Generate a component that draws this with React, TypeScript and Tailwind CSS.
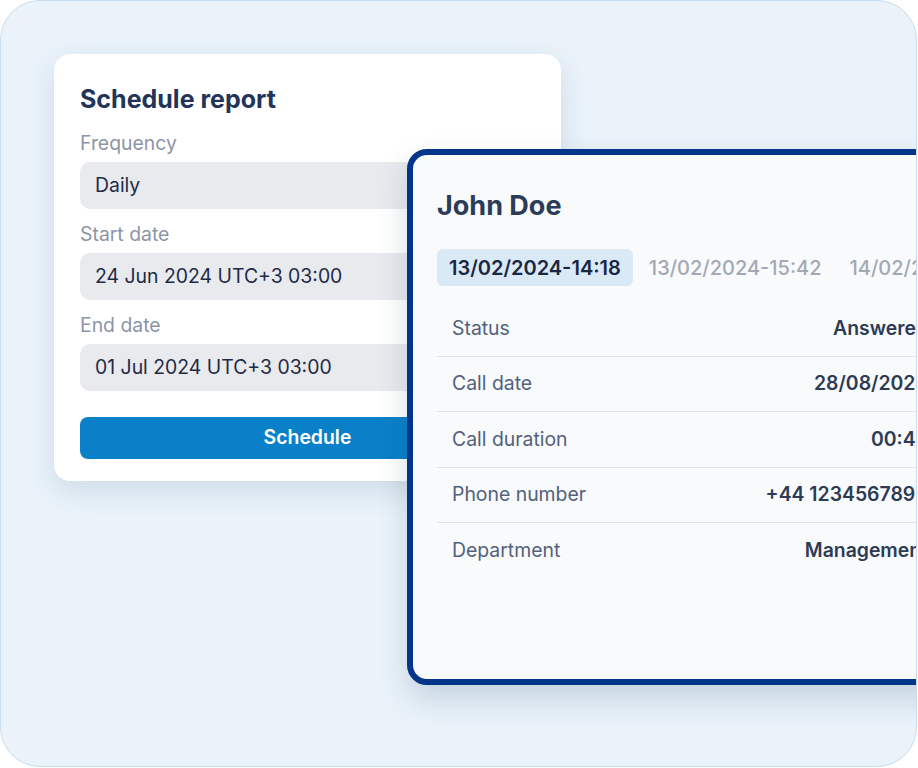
const fields = [
    { label: 'Frequency', value: 'Daily' },
    { label: 'Start date', value: '24 Jun 2024 UTC+3 03:00' },
    { label: 'End date', value: '01 Jul 2024 UTC+3 03:00' },
];

const tabs = ['13/02/2024-14:18', '13/02/2024-15:42', '14/02/2024-09:05'];

const rows = [
    { label: 'Status', value: 'Answered' },
    { label: 'Call date', value: '28/08/2024' },
    { label: 'Call duration', value: '00:49' },
    { label: 'Phone number', value: '+44 1234567890' },
    { label: 'Department', value: 'Management' },
];

const ScheduleCard = () => (
    <div className="w-[507px] rounded-[16px] bg-white px-[26px] pt-[29px] pb-[22px] shadow-[0_10px_28px_rgba(40,70,110,0.14)]">
        <h2 className="text-[25px] leading-[32px] font-bold text-[#22345a]">Schedule report</h2>
        <div className="mt-[14px]">
            {fields.map((f, i) => (
                <div key={f.label} className={i > 0 ? 'mt-[11px]' : ''}>
                    <div className="text-[19.4px] leading-[28px] text-[#8c95a6]">{f.label}</div>
                    <div className="mt-[5px] h-[47px] rounded-[10px] bg-[#e9eaee] px-[15px] flex items-center text-[19.4px] text-[#1f2b45]">
                        {f.value}
                    </div>
                </div>
            ))}
        </div>
        <button className="mt-[26px] w-full h-[42px] rounded-[8px] bg-[#0a80c8] text-white text-[19.4px] font-semibold">
            Schedule
        </button>
    </div>
);

const CallCard = () => (
    <div className="absolute left-[406px] top-[148px] w-[566px] h-[536px] rounded-[20px] border-[6px] border-[#03358a] bg-[#f8fafc] px-[24px] pt-[33px] shadow-[0_14px_30px_rgba(30,60,100,0.18)]">
        <h3 className="text-[27px] leading-[36px] font-bold text-[#2b3b58]">John Doe</h3>
        <div className="mt-[25px] flex gap-1">
            {tabs.map((t, i) => (
                <span
                    key={t}
                    className={
                        i === 0
                            ? 'shrink-0 whitespace-nowrap h-[37px] px-3 flex items-center rounded-[6px] bg-[#d9eaf6] text-[20px] font-semibold text-[#1a2742]'
                            : 'shrink-0 whitespace-nowrap h-[37px] px-3 flex items-center text-[20px] font-medium text-[#a3a9b4]'
                    }
                >
                    {t}
                </span>
            ))}
        </div>
        <div className="mt-[15px]">
            {rows.map((r, i) => (
                <div
                    key={r.label}
                    className={[
                        'h-[55.5px] px-[15px] flex items-center justify-between text-[19.4px]',
                        i < rows.length - 1 ? 'border-b-[1.5px] border-[#e1e4e9]' : '',
                    ].join(' ')}
                >
                    <span className="text-[#52617c]">{r.label}</span>
                    <span className="font-semibold text-[#2d3b55] whitespace-nowrap">{r.value}</span>
                </div>
            ))}
        </div>
    </div>
);

export default function App() {
    return (
        <div className="w-[918px] h-[768px] bg-white" style={{ fontFamily: 'Inter, "Noto Sans", sans-serif' }}>
            <div className="relative w-[917px] h-[767px] overflow-hidden rounded-[40px] border border-[#c6def0] bg-[#eaf3fa] pt-[53px] pl-[53px]">
                <ScheduleCard />
                <CallCard />
            </div>
        </div>
    );
}
